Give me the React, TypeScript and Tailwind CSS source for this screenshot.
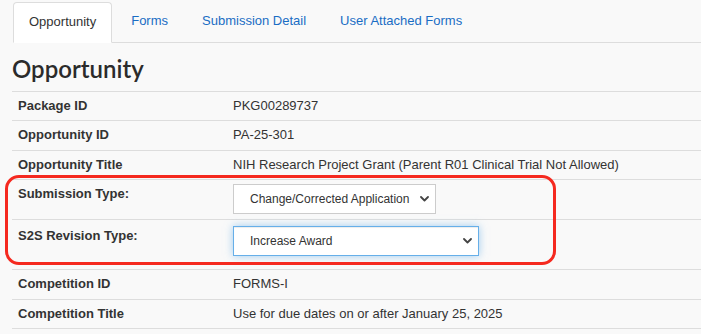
import { ReactNode } from "react";

const tabs = ["Forms", "Submission Detail", "User Attached Forms"];

function Chevron() {
	return (
		<svg width="9" height="6" viewBox="0 0 9 6" fill="none" className="shrink-0">
			<path d="M1 1l3.5 3.5L8 1" stroke="#444" strokeWidth="1.8" strokeLinecap="round" strokeLinejoin="round" />
		</svg>
	);
}

function Row({ label, children }: { label: string; children: ReactNode }) {
	return (
		<div className="grid grid-cols-[215px_1fr] border-b border-[#dddddd] leading-[18.57px]">
			<div className="px-[6px] py-[5px] font-bold">{label}</div>
			<div className="px-[6px] py-[5px]">{children}</div>
		</div>
	);
}

export default function App() {
	return (
		<div className="min-h-screen bg-[#f9f9f9] font-['Liberation_Sans',Arial,sans-serif] text-[13px] text-[#333]">
			{/* tabs */}
			<div className="pt-[2px] ml-[13px] border-b border-[#dddddd] flex leading-[18.57px]">
				<div className="-mb-px px-[15px] py-[10px] bg-white border border-[#dddddd] border-b-white rounded-t-[4px] text-[#333]">
					Opportunity
				</div>
				<div className="flex ml-[3px]">
					{tabs.map((t) => (
						<div key={t} className="px-[16px] py-[10px] mr-[2px] text-[#1a6dc4]">
							{t}
						</div>
					))}
				</div>
			</div>

			<div className="pl-[12px]">
				<h1 className="pt-[12px] pb-[9px] border-b border-[#dddddd] font-['Lato',sans-serif] font-semibold text-[24px] leading-[27px] text-[#2b2b2b]">
					Opportunity
				</h1>

				<Row label="Package ID">PKG00289737</Row>
				<Row label="Opportunity ID">PA-25-301</Row>
				<Row label="Opportunity Title">NIH Research Project Grant (Parent R01 Clinical Trial Not Allowed)</Row>

				<div className="relative">
					<div className="grid grid-cols-[215px_1fr] border-b border-[#dddddd] leading-[18.57px]">
						<div className="px-[6px] pt-[5px] font-bold">Submission Type:</div>
						<div className="px-[6px] pt-[4px] pb-[5px]">
							<div className="w-[203px] h-[30px] flex items-center justify-between pl-[16px] pr-[6px] bg-white border border-[#cccccc] text-[12px]">
								<span className="whitespace-nowrap">Change/Corrected Application</span>
								<Chevron />
							</div>
						</div>
					</div>
					<div className="grid grid-cols-[215px_1fr] border-b border-[#dddddd] leading-[18.57px]">
						<div className="px-[6px] pt-[7px] font-bold">S2S Revision Type:</div>
						<div className="px-[6px] pt-[6px] pb-[13px]">
							<div className="w-[246px] h-[30px] flex items-center justify-between pl-[16px] pr-[6px] bg-white border border-[#66afe9] text-[12px] shadow-[inset_0_1px_1px_rgba(0,0,0,0.075),0_0_8px_rgba(102,175,233,0.6)]">
								<span className="whitespace-nowrap">Increase Award</span>
								<Chevron />
							</div>
						</div>
					</div>
					{/* annotation highlight */}
					<div className="absolute left-[-7px] top-[-5px] w-[551px] h-[90px] border-[3px] border-[#f5291f] rounded-[14px] pointer-events-none" />
				</div>

				<Row label="Competition ID">FORMS-I</Row>
				<Row label="Competition Title">Use for due dates on or after January 25, 2025</Row>
			</div>
		</div>
	);
}
